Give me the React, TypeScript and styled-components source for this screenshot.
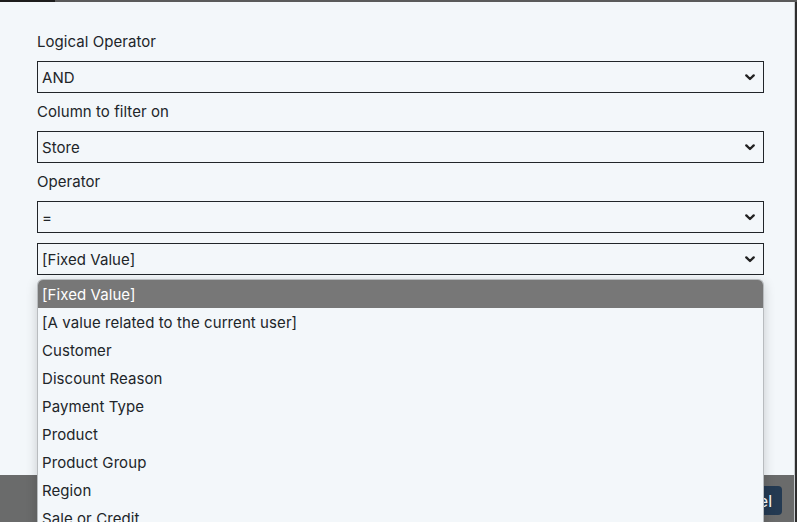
import React from "react";
import styled, { createGlobalStyle } from "styled-components";

const GlobalStyle = createGlobalStyle`
    html, body {
        margin: 0;
        padding: 0;
        overflow: hidden;
        background: #2e2e2e;
    }
    body {
        font-family: Inter, "Noto Sans", "Liberation Sans", sans-serif;
        color: #212529;
    }
`;

const fields = [
    { label: 'Logical Operator', value: 'AND' },
    { label: 'Column to filter on', value: 'Store' },
    { label: 'Operator', value: '=' },
];

const options: string[] = [
    '[Fixed Value]',
    '[A value related to the current user]',
    'Customer',
    'Discount Reason',
    'Payment Type',
    'Product',
    'Product Group',
    'Region',
    'Sale or Credit',
];

const Chevron: React.FC = () => (
    <svg width="10" height="7" viewBox="0 0 10 7">
        <path d="M1.3 1.4 L5 5 L8.7 1.4" fill="none" stroke="#222" strokeWidth="2.3" strokeLinecap="round" strokeLinejoin="round" />
    </svg>
);

const Select: React.FC<{ value: string }> = ({ value }) => (
    <SelectBox>
        <span>{value}</span>
        <Chevron />
    </SelectBox>
);

const App: React.FC = () => {
    return (
        <>
            <GlobalStyle />
            <Screen>
                <TopStrip>
                    <StripDark />
                </TopStrip>
                <Modal>
                    <Body>
                        {fields.map((f) => (
                            <React.Fragment key={f.label}>
                                <Label>{f.label}</Label>
                                <Select value={f.value} />
                            </React.Fragment>
                        ))}
                        <ValueRow>
                            <Select value="[Fixed Value]" />
                            <Dropdown>
                                {options.map((o, i) => (
                                    <Option key={o} $active={i === 0}>{o}</Option>
                                ))}
                            </Dropdown>
                        </ValueRow>
                        <HiddenInput />
                    </Body>
                    <Footer>
                        <CancelButton>Cancel</CancelButton>
                    </Footer>
                </Modal>
            </Screen>
        </>
    );
};

const Screen = styled.div`
    height: 522px;
    width: 797px;
    display: flex;
    flex-direction: column;
`;

const TopStrip = styled.div`
    height: 2px;
    display: flex;
    background: #5a5a5a;
`;

const StripDark = styled.div`
    width: 55px;
    background: #1c1c1c;
`;

const Modal = styled.div`
    flex: 1;
    width: 794px;
    display: flex;
    flex-direction: column;
    border-right: 1px solid #c9cdd0;
`;

const Body = styled.div`
    flex: 1;
    background: #f3f7fa;
    padding: 21px 30px 0 37px;
    display: flex;
    flex-direction: column;
`;

const Label = styled.div`
    padding-top: 8px;
    margin-bottom: 8px;
    font-size: 15px;
    line-height: 22px;
    letter-spacing: 0.05px;
    color: #212529;
`;

const SelectBox = styled.div`
    box-sizing: border-box;
    height: 32px;
    border: 1px solid #212529;
    background: #f3f7fa;
    padding: 0 8px 0 4px;
    display: flex;
    align-items: center;
    justify-content: space-between;
    font-size: 15px;
    letter-spacing: 0.05px;
    color: #212529;
`;

const ValueRow = styled.div`
    position: relative;
    margin-top: 10px;
`;

const HiddenInput = styled.div`
    box-sizing: border-box;
    height: 32px;
    margin-top: 36px;
    border: 1px solid #212529;
`;

const Dropdown = styled.div`
    position: absolute;
    z-index: 10;
    top: 36px;
    left: 0;
    right: 0;
    background: #f3f7fa;
    border: 1px solid #b8bcbf;
    border-bottom: none;
    border-radius: 6px 6px 0 0;
    overflow: hidden;
    box-shadow: 0 3px 12px rgba(0, 0, 0, 0.18);
`;

const Option = styled.div<{ $active?: boolean }>`
    height: 28px;
    padding-left: 4px;
    display: flex;
    align-items: center;
    font-size: 15px;
    letter-spacing: 0.08px;
    background: ${(p) => (p.$active ? '#777777' : 'transparent')};
    color: ${(p) => (p.$active ? '#ffffff' : '#212529')};
`;

const Footer = styled.div`
    height: 47px;
    box-sizing: border-box;
    background: #6a6b6b;
    display: flex;
    justify-content: flex-end;
    align-items: flex-start;
    padding: 11px 12px 0 0;
`;

const CancelButton = styled.button`
    height: 29px;
    padding: 0 10px;
    border: none;
    border-radius: 4px;
    background: #243a52;
    color: #ffffff;
    font-family: Inter, "Noto Sans", "Liberation Sans", sans-serif;
    font-size: 16px;
`;

export default App;
